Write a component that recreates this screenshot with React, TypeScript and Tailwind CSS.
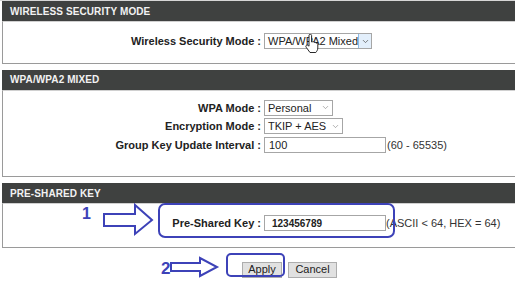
import { ChevronDown } from 'lucide-react'

const Section = ({ title, children, bodyClass }: { title: string; children: React.ReactNode; bodyClass: string }) => (
  <div className="w-[530px]">
    <div className="h-[20px] bg-[#3f4140] pl-[8px] flex items-center text-[10px] font-bold text-[#f2f2f2] tracking-[0.1px]">
      {title}
    </div>
    <div className={`border border-t-[#d0d0d0] border-x-[#9a9a9a] border-b-[#9a9a9a] bg-white ${bodyClass}`}>{children}</div>
  </div>
)

const Label = ({ children }: { children: React.ReactNode }) => (
  <div className="text-right font-bold text-[11px] text-[#222] whitespace-nowrap pr-[1px]">{children}</div>
)

const FakeSelect = ({ value, width, hover }: { value: string; width: string; hover?: boolean }) => (
  <div className={`h-[16px] ${width} border border-[#a6a6a6] bg-white flex items-center text-[11px] text-[#222]`}>
    <span className="pl-[3px] flex-1 whitespace-nowrap">{value}</span>
    {hover ? (
      <span className="h-full w-[13px] bg-[#e3effb] border-l border-[#8cbbe8] flex items-center justify-center">
        <ChevronDown size={9} strokeWidth={2} className="text-[#555]" />
      </span>
    ) : (
      <span className="w-[13px] flex items-center justify-center">
        <ChevronDown size={9} strokeWidth={1.5} className="text-[#777]" />
      </span>
    )}
  </div>
)

export default function App() {
  return (
    <div
      className="relative w-[515px] h-[283px] overflow-hidden bg-white"
      style={{ fontFamily: '"Liberation Sans", Arial, sans-serif' }}
    >
      <div className="h-[1px] bg-[#d6d6d6]" />
      <div className="pl-[2px] flex flex-col gap-[6px]">
        {/* wireless security mode */}
        <Section title="WIRELESS SECURITY MODE" bodyClass="pt-[11px] pb-[13px]">
          <div className="grid grid-cols-[259px_auto] gap-x-[2px] items-center">
            <Label>Wireless Security Mode :</Label>
            <FakeSelect value="WPA/WPA2 Mixed" width="w-[108px]" hover />
          </div>
        </Section>

        {/* wpa mixed */}
        <Section title="WPA/WPA2 MIXED" bodyClass="pt-[9px] pb-[23px]">
          <div className="grid grid-cols-[259px_auto] gap-x-[2px] gap-y-[2px] items-center">
            <Label>WPA Mode :</Label>
            <FakeSelect value="Personal" width="w-[69px]" />
            <Label>Encryption Mode :</Label>
            <FakeSelect value="TKIP + AES" width="w-[79px]" />
            <Label>Group Key Update Interval :</Label>
            <div className="flex items-center">
              <div className="h-[16px] w-[122px] border border-[#a6a6a6] text-[11px] text-[#222] pl-[4px] flex items-center">100</div>
              <span className="text-[11px] text-[#333] pl-[1px]">(60 - 65535)</span>
            </div>
          </div>
        </Section>

        {/* psk */}
        <Section title="PRE-SHARED KEY" bodyClass="pt-[11px] pb-[15px]">
          <div className="grid grid-cols-[259px_auto] gap-x-[2px] items-center">
            <Label>Pre-Shared Key :</Label>
            <div className="flex items-center">
              <div className="h-[16px] w-[122px] border border-[#a6a6a6] text-[10px] font-bold text-[#222] pl-[7px] flex items-center">
                123456789
              </div>
              <span className="text-[11px] text-[#333]">(ASCII &lt; 64, HEX = 64)</span>
            </div>
          </div>
        </Section>
      </div>

      {/* buttons */}
      <div className="flex gap-[6px] pl-[242px] mt-[14px]">
        <button className="h-[16px] w-[40px] bg-[#e1e1e1] border border-[#adadad] text-[11px] text-[#222] leading-none">Apply</button>
        <button className="h-[16px] w-[49px] bg-[#e1e1e1] border border-[#adadad] text-[11px] text-[#222] leading-none">Cancel</button>
      </div>

      {/* annotations */}
      <span className="absolute left-[82px] top-[206px] text-[16px] font-bold text-[#3d42b8] leading-none">1</span>
      <span className="absolute left-[161px] top-[260px] text-[17px] font-bold text-[#3d42b8] leading-none">2</span>
      <div className="absolute left-[158px] top-[203px] w-[237px] h-[35px] rounded-[7px] border-2 border-[#3d42b8]" />
      <div className="absolute left-[226px] top-[253px] w-[59px] h-[24px] rounded-[5px] border-2 border-[#3d42b8]" />
      <svg className="absolute left-0 top-0 pointer-events-none" width="515" height="283">
        <polygon points="104,214 135,214 135,205 152,220 135,234 135,226 104,226" fill="none" stroke="#3d42b8" strokeWidth="2" strokeLinejoin="miter" />
        <polygon points="171,263 200,263 200,258 217,267 200,276 200,271 171,271" fill="none" stroke="#3d42b8" strokeWidth="2" />
      </svg>

      {/* cursor */}
      <svg className="absolute left-[304px] top-[34px]" width="15" height="20" viewBox="0 0 15 20">
        <path
          d="M5 1.5C5 .7 5.6.2 6.3.2S7.6.7 7.6 1.5V8l.6-.1c.6-.5 1.8-.3 2 .5.6-.4 1.8-.1 1.9.8.6-.3 1.7.1 1.7 1.1V14c0 2-1.2 3.5-2 4.5H6L2.2 13.3c-.6-.8-.4-1.8.4-2.1.7-.3 1.6.1 2.4 1Z"
          fill="#fff"
          stroke="#111"
          strokeWidth="0.9"
        />
      </svg>
    </div>
  )
}
